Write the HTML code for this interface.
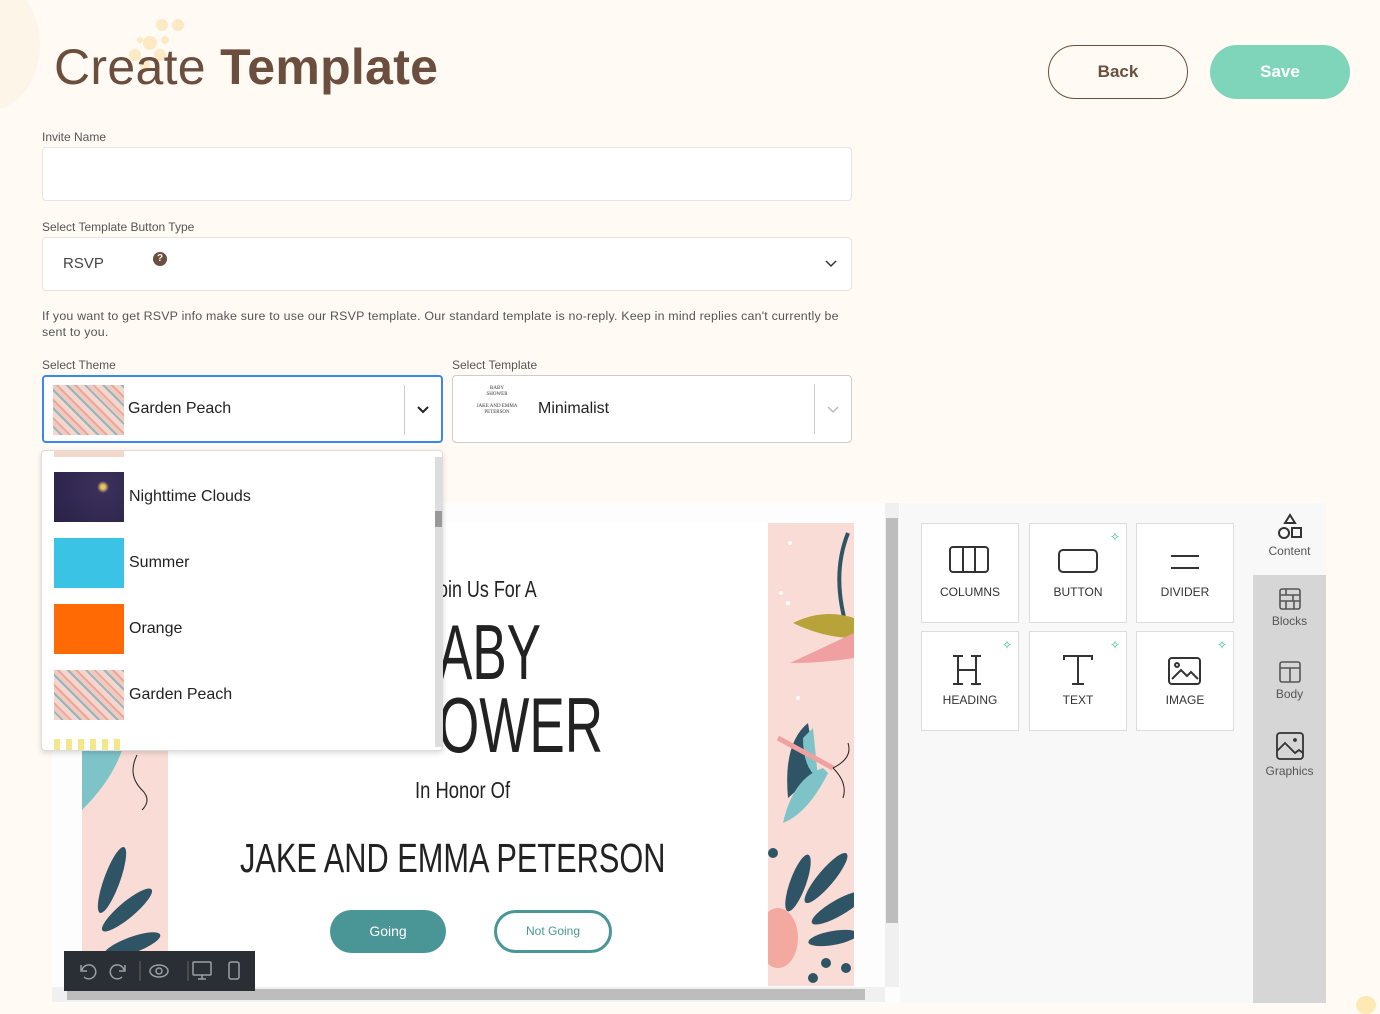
<!DOCTYPE html>
<html><head><meta charset="utf-8"><style>
*{box-sizing:border-box;margin:0;padding:0}
body{width:1380px;height:1014px;background:#fffaf3;font-family:"Liberation Sans",sans-serif;position:relative;overflow:hidden;color:#333}
.abs{position:absolute}
h1{position:absolute;left:54px;top:38px;font-size:50px;font-weight:400;color:#6b4e3d;letter-spacing:.3px}
h1 b{font-weight:700}
.btn{position:absolute;top:45px;width:140px;height:54px;border-radius:27px;font-size:17px;font-weight:700;display:flex;align-items:center;justify-content:center}
.lbl{position:absolute;left:42px;font-size:12px;color:#555}
.inp{position:absolute;background:#fff;border:1px solid #e8e4de;border-radius:4px}
.t{font-size:16px;color:#222}
.opt{position:absolute;left:54px;display:flex;align-items:center}
.opt .sw{width:70px;height:50px;margin-right:5px}
.opt span{font-size:16px;color:#222}
.tile{position:absolute;width:98px;height:100px;background:#fff;border:1px solid #ddd;text-align:center;font-size:12px;color:#333}
.tile .ic{position:absolute;left:0;right:0;top:22px;display:flex;justify-content:center}
.tile .nm{position:absolute;left:0;right:0;top:61px}
.sp{position:absolute;right:6px;top:6px;color:#2bbf8f;font-size:12px}
.tab{position:absolute;left:1253px;width:73px;text-align:center;font-size:12px;color:#555}
.inv{font-family:"Liberation Sans",sans-serif;font-weight:400;color:#222;position:absolute;white-space:nowrap;transform-origin:left}
</style></head><body>
<div class="abs" style="left:-60px;top:-20px;width:100px;height:130px;border-radius:50%;background:#fdf1e2;opacity:.6"></div>
<svg class="abs" style="left:110px;top:15px" width="80" height="70"><g fill="#fde9c4"><circle cx="52" cy="10" r="6"/><circle cx="68" cy="10" r="6"/><circle cx="40" cy="28" r="7"/><circle cx="55" cy="25" r="4"/><circle cx="25" cy="40" r="6"/><circle cx="50" cy="40" r="6"/><circle cx="35" cy="50" r="5"/><circle cx="30" cy="25" r="3"/></g></svg>
<h1>Create <b>Template</b></h1>
<div class="btn" style="left:1048px;border:1px solid #6b4e3d;color:#6b4e3d;background:transparent">Back</div>
<div class="btn" style="left:1210px;background:#7fd5b9;color:#fff">Save</div>

<div class="lbl" style="top:130px">Invite Name</div>
<div class="inp" style="left:42px;top:147px;width:810px;height:54px"></div>
<div class="lbl" style="top:220px">Select Template Button Type</div>
<div class="inp" style="left:42px;top:237px;width:810px;height:54px">
 <span class="abs" style="left:20px;top:17px;font-size:15px;color:#444">RSVP</span>
 <span class="abs" style="left:110px;top:14px;width:14px;height:14px;border-radius:50%;background:#6b4e3d;color:#fff;font-size:10px;font-weight:700;text-align:center;line-height:14px">?</span>
 <svg class="abs" style="left:782px;top:22px" width="12" height="8"><path d="M1 1l5 5 5-5" stroke="#333" stroke-width="1.5" fill="none"/></svg>
</div>
<div class="lbl" style="top:308px;width:812px;line-height:16px;font-size:12.4px;letter-spacing:.2px">If you want to get RSVP info make sure to use our RSVP template. Our standard template is no-reply. Keep in mind replies can't currently be sent to you.</div>
<div class="lbl" style="top:358px">Select Theme</div>
<div class="lbl" style="top:358px;left:452px">Select Template</div>
<div class="inp" style="left:42px;top:375px;width:401px;height:68px;border:2px solid #3b86f0">
 <div class="abs" style="left:9px;top:8px;width:71px;height:50px;background:repeating-linear-gradient(45deg,#f5d5cc 0 5px,#8fb8c0 5px 7px,#f3c9be 7px 11px,#e8a89d 11px 13px)"></div>
 <span class="abs t" style="left:84px;top:23px">Garden Peach</span>
 <div class="abs" style="left:360px;top:8px;width:1px;height:50px;background:#ccc"></div>
 <svg class="abs" style="left:373px;top:29px" width="12" height="8"><path d="M1 1l5 5 5-5" stroke="#222" stroke-width="2" fill="none"/></svg>
</div>
<div class="inp" style="left:452px;top:375px;width:400px;height:68px;border-color:#ccc">
 <div class="abs" style="left:14px;top:10px;width:60px;height:48px;font-family:'Liberation Serif',serif;font-size:5px;text-align:center;color:#333;line-height:6px">BABY<br>SHOWER<br><br>JAKE AND EMMA PETERSON</div>
 <span class="abs t" style="left:85px;top:24px">Minimalist</span>
 <div class="abs" style="left:361px;top:8px;width:1px;height:50px;background:#ccc"></div>
 <svg class="abs" style="left:374px;top:30px" width="12" height="8"><path d="M1 1l5 5 5-5" stroke="#bbb" stroke-width="1.5" fill="none"/></svg>
</div>

<!-- editor -->
<div class="abs" style="left:52px;top:503px;width:848px;height:500px;background:#fdfdfd"></div>
<div class="abs" style="left:82px;top:523px;width:86px;height:463px;background:#f9dcd6"></div>
<div class="abs" style="left:768px;top:523px;width:86px;height:463px;background:#f9dcd6"></div>
<div class="abs" style="left:168px;top:523px;width:600px;height:463px;background:#fff"></div>
<svg class="abs" style="left:768px;top:523px" width="86" height="463">
 <path d="M80 10q-20 50 6 115" stroke="#2e5466" stroke-width="4" fill="none"/>
 <path d="M25 100q30-15 61-5l0 20q-30 0-61-15z" fill="#b8a23a"/>
 <path d="M22 140l64-30 0 25q-30 5-64 5z" fill="#f0a0a0"/>
 <path d="M40 200q-25 20-20 75l28-25z" fill="#2e5466"/><path d="M35 215q0 30 15 40l-5-50z" fill="#7dc3c8"/>
 <path d="M10 215l55 30" stroke="#f0a0a0" stroke-width="5"/>
 <path d="M55 245q-30 10-40 55q25-10 45-50z" fill="#7dc3c8"/>
 <path d="M65 245q20-10 15-25M65 245q15 15 10 30" stroke="#222" fill="none"/>
 <g fill="#2e5466"><ellipse cx="30" cy="360" rx="8" ry="30" transform="rotate(20 30 360)"/><ellipse cx="58" cy="355" rx="8" ry="32" transform="rotate(40 58 355)"/><ellipse cx="70" cy="385" rx="8" ry="30" transform="rotate(60 70 385)"/><ellipse cx="65" cy="415" rx="7" ry="25" transform="rotate(80 65 415)"/><circle cx="5" cy="330" r="5"/><circle cx="58" cy="440" r="5"/><circle cx="78" cy="445" r="5"/><circle cx="45" cy="455" r="5"/></g>
 <ellipse cx="10" cy="415" rx="20" ry="30" fill="#f4a9a0"/>
 <g fill="#fff"><circle cx="22" cy="20" r="2"/><circle cx="13" cy="70" r="2"/><circle cx="20" cy="80" r="2"/><circle cx="30" cy="175" r="2"/></g>
</svg>
<svg class="abs" style="left:82px;top:750px" width="86" height="236"><path d="M55 5q-10 20 5 35q10 10 0 20" stroke="#222" fill="none"/><path d="M0 0l40 0q-10 30-40 60z" fill="#7dc3c8"/><g fill="#2e5466"><ellipse cx="30" cy="130" rx="8" ry="35" transform="rotate(20 30 130)"/><ellipse cx="45" cy="160" rx="8" ry="32" transform="rotate(50 45 160)"/><ellipse cx="50" cy="195" rx="8" ry="30" transform="rotate(70 50 195)"/><circle cx="40" cy="230" r="6"/><circle cx="60" cy="220" r="6"/></g></svg>
<div class="inv" style="left:438px;top:576px;font-size:23px;transform:scaleX(.78)">oin Us For A</div>
<div class="inv" style="left:438px;top:612px;font-size:78px;transform:scaleX(.66);line-height:80px">ABY</div>
<div class="inv" style="left:438px;top:685px;font-size:78px;transform:scaleX(.68);line-height:80px">OWER</div>
<div class="inv" style="left:415px;top:777px;font-size:23px;transform:scaleX(.8)">In Honor Of</div>
<div class="inv" style="left:240px;top:835px;font-size:41px;transform:scaleX(.75)">JAKE AND EMMA PETERSON</div>
<div class="abs" style="left:330px;top:910px;width:116px;height:43px;border-radius:22px;background:#4a9696;color:#fff;font-size:14px;text-align:center;line-height:43px">Going</div>
<div class="abs" style="left:494px;top:910px;width:118px;height:43px;border-radius:22px;border:3px solid #4a9696;background:#fff;color:#4a9696;font-size:12px;text-align:center;line-height:37px">Not Going</div>
<div class="abs" style="left:885px;top:503px;width:14px;height:484px;background:#f0f0f0"></div>
<div class="abs" style="left:886px;top:518px;width:12px;height:405px;background:#bdbdbd"></div>
<div class="abs" style="left:52px;top:987px;width:833px;height:15px;background:#f0f0f0"></div>
<div class="abs" style="left:67px;top:989px;width:798px;height:11px;background:#bdbdbd"></div>
<div class="abs" style="left:64px;top:951px;width:191px;height:40px;background:#2a2f36"></div>
<svg class="abs" style="left:64px;top:951px" width="191" height="40" fill="none" stroke="#9aa0a6" stroke-width="1.5"><path d="M17 14v6h6M18 19a7 7 0 1 1 2 7"/><path d="M61 14v6h-6M60 19a7 7 0 1 0-2 7"/><path d="M76 10v20M124 10v20" stroke="#555"/><ellipse cx="95" cy="20" rx="9" ry="6"/><circle cx="95" cy="20" r="3"/><rect x="129" y="11" width="18" height="13" rx="1"/><path d="M134 28h8M138 24v4"/><rect x="165" y="11" width="10" height="17" rx="2"/></svg>

<!-- right panel -->
<div class="abs" style="left:900px;top:503px;width:353px;height:500px;background:#f8f8f8"></div>
<div class="abs" style="left:1253px;top:503px;width:73px;height:500px;background:#d6d6d6"></div>
<div class="abs" style="left:1253px;top:503px;width:73px;height:72px;background:#f8f8f8"></div>
<div class="tile" style="left:921px;top:523px"><div class="ic"><svg width="42" height="28" fill="none" stroke="#333" stroke-width="2"><rect x="1" y="1" width="38" height="25" rx="3"/><path d="M14 1v25M26 1v25"/></svg></div><div class="nm">COLUMNS</div></div>
<div class="tile" style="left:1029px;top:523px"><span class="sp">✧</span><div class="ic"><svg width="42" height="28" fill="none" stroke="#333" stroke-width="2"><rect x="2" y="4" width="38" height="22" rx="4"/></svg></div><div class="nm">BUTTON</div></div>
<div class="tile" style="left:1136px;top:523px"><div class="ic"><svg width="42" height="28" fill="none" stroke="#333" stroke-width="2"><path d="M7 10h28M7 22h28"/></svg></div><div class="nm">DIVIDER</div></div>
<div class="tile" style="left:921px;top:631px"><span class="sp">✧</span><div class="ic" style="top:20px"><svg width="42" height="34" fill="none" stroke="#333" stroke-width="2"><path d="M9 4v28M27 4v28M9 18h18M4 4h10M22 4h10M4 32h10M22 32h10"/></svg></div><div class="nm" style="top:61px">HEADING</div></div>
<div class="tile" style="left:1029px;top:631px"><span class="sp">✧</span><div class="ic" style="top:20px"><svg width="42" height="34" fill="none" stroke="#333" stroke-width="2"><path d="M7 8V4h28v4M21 4v28M15 32h12"/></svg></div><div class="nm" style="top:61px">TEXT</div></div>
<div class="tile" style="left:1136px;top:631px"><span class="sp">✧</span><div class="ic" style="top:24px"><svg width="42" height="30" fill="none" stroke="#333" stroke-width="2"><rect x="5" y="2" width="31" height="26" rx="3"/><circle cx="13" cy="9" r="2"/><path d="M8 23l9-9 6 6 4-4 7 7"/></svg></div><div class="nm" style="top:61px">IMAGE</div></div>
<div class="tab" style="top:513px"><svg width="26" height="28" fill="none" stroke="#333" stroke-width="2"><path d="M13 2l5 8h-10z"/><circle cx="7" cy="20" r="5"/><rect x="15" y="15" width="9" height="9"/></svg><div>Content</div></div>
<div class="tab" style="top:587px"><svg width="24" height="24" fill="none" stroke="#555" stroke-width="1.6"><rect x="2" y="2" width="20" height="20" rx="2"/><path d="M2 8h20M2 14h20M8 2v6M15 8v6M8 14v8M16 14v8"/></svg><div>Blocks</div></div>
<div class="tab" style="top:660px"><svg width="24" height="24" fill="none" stroke="#555" stroke-width="1.6"><rect x="2" y="2" width="20" height="20" rx="2"/><path d="M2 8h20M12 8v14"/></svg><div>Body</div></div>
<div class="tab" style="top:731px"><svg width="30" height="30" fill="none" stroke="#333" stroke-width="1.8"><rect x="2" y="2" width="26" height="26" rx="3"/><path d="M2 20l8-8 10 10 4-3 4 3"/><circle cx="20" cy="9" r="1"/></svg><div>Graphics</div></div>

<!-- dropdown -->
<div class="abs" style="left:41px;top:450px;width:402px;height:301px;background:#fff;border:1px solid #ddd;border-radius:4px;box-shadow:0 2px 6px rgba(0,0,0,.15);overflow:hidden">
 <div class="abs" style="left:393px;top:6px;width:8px;height:290px;background:#ddd"></div>
 <div class="abs" style="left:393px;top:60px;width:8px;height:16px;background:#999"></div>
 <div class="abs" style="left:12px;top:0;width:70px;height:6px;background:#f3d7c8"></div>
 <div class="abs" style="left:12px;top:288px;width:70px;height:12px;background:repeating-linear-gradient(90deg,#f4e78a 0 6px,#fff 6px 12px)"></div>
</div>
<div class="opt" style="top:472px"><div class="sw" style="background:radial-gradient(circle at 70% 30%,#e8c860 2px,#3a2f5a 6px,#2a2248)"></div><span>Nighttime Clouds</span></div>
<div class="opt" style="top:538px"><div class="sw" style="background:#3bc3e5"></div><span>Summer</span></div>
<div class="opt" style="top:604px"><div class="sw" style="background:#ff6a05"></div><span>Orange</span></div>
<div class="opt" style="top:670px"><div class="sw" style="background:repeating-linear-gradient(45deg,#f5d5cc 0 5px,#8fb8c0 5px 7px,#f3c9be 7px 11px,#e8a89d 11px 13px)"></div><span>Garden Peach</span></div>
<div class="abs" style="left:1356px;top:996px;width:20px;height:18px;border-radius:50%;background:#fde9b4"></div>
</body></html>
